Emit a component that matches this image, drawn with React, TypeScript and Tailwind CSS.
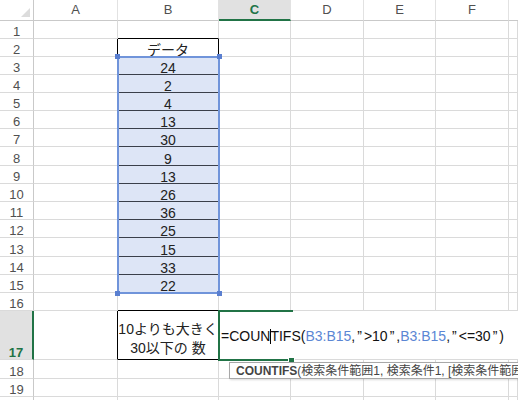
import React from 'react'

// --- sheet data ---
type Row = { n: number; h: string; v?: string; label?: boolean }

const dataRows: Row[] = [
  { n: 1, h: 'h-[18px]' },
  { n: 2, h: 'h-[18px]', v: 'データ' },
  { n: 3, h: 'h-[18px]', v: '24' },
  { n: 4, h: 'h-[18px]', v: '2' },
  { n: 5, h: 'h-[18px]', v: '4' },
  { n: 6, h: 'h-[18px]', v: '13' },
  { n: 7, h: 'h-[18px]', v: '30' },
  { n: 8, h: 'h-[19px]', v: '9' },
  { n: 9, h: 'h-[18px]', v: '13' },
  { n: 10, h: 'h-[18px]', v: '26' },
  { n: 11, h: 'h-[18px]', v: '36' },
  { n: 12, h: 'h-[18px]', v: '25' },
  { n: 13, h: 'h-[19px]', v: '15' },
  { n: 14, h: 'h-[18px]', v: '33' },
  { n: 15, h: 'h-[18px]', v: '22' },
  { n: 16, h: 'h-[18px]' },
]

const tailRows: Row[] = [
  { n: 18, h: 'h-[19px]' },
  { n: 19, h: 'h-[18px]' },
  { n: 20, h: 'h-[21px]', label: false },
]

const GRID = 'border-r border-b border-r-[#dadada] border-b-[#dadada]'

function RowHead({ n, label = true }: { n: number; label?: boolean }) {
  return (
    <div className="w-[34px] shrink-0 flex items-end justify-center border-r border-b border-r-[#c9c9c9] border-b-[#dadada] text-[13px] leading-[10px] pb-[1px] text-[#505050]">
      {label ? n : null}
    </div>
  )
}

function EmptyCells() {
  return (
    <>
      <div className={`w-[72px] shrink-0 ${GRID}`} />
      <div className={`w-[73px] shrink-0 ${GRID}`} />
      <div className={`w-[72px] shrink-0 ${GRID}`} />
      <div className={`w-[73px] shrink-0 ${GRID}`} />
      <div className={`flex-1 ${GRID}`} />
    </>
  )
}

function SheetRow({ row }: { row: Row }) {
  const boxed = row.n >= 2 && row.n <= 15
  const selected = row.n >= 3 && row.n <= 15
  const aRight = boxed ? 'border-r-black' : 'border-r-[#dadada]'
  let bClass = 'border-r-[#dadada] border-b-[#dadada]'
  if (row.n === 1 || row.n === 16) bClass = 'border-r-[#dadada] border-b-black'
  if (row.n === 2) bClass = 'border-r-black border-b-black'
  if (selected) bClass = 'border-r-black border-b-[#3a3f4a] bg-[#dde5f6]'

  return (
    <div className={`flex ${row.h}`}>
      <RowHead n={row.n} />
      <div className={`w-[84px] shrink-0 border-r border-b border-b-[#dadada] ${aRight}`} />
      <div className={`w-[101px] shrink-0 border-r border-b flex items-end justify-center text-[14px] leading-[10px] pb-[1px] text-[#222] ${bClass}`}>
        {row.v}
      </div>
      <EmptyCells />
    </div>
  )
}

function Ref({ children }: { children: React.ReactNode }) {
  return <span className="text-[#5b86d4]">{children}</span>
}

function Q() {
  return <span className="mx-[2px]">”</span>
}

export default function App() {
  return (
    <div className="relative w-[518px] h-[400px] overflow-hidden bg-white font-['Liberation_Sans','Noto_Sans_CJK_JP',sans-serif]">
      {/* --- column headers --- */}
      <div className="flex h-[21px]">
        <div className="w-[34px] shrink-0 border-r border-b border-r-[#c9c9c9] border-b-[#c9c9c9] flex items-end justify-end pr-[3px] pb-[3px]">
          <svg width="9" height="9" viewBox="0 0 9 9">
            <polygon points="9,0 9,9 0,9" fill="#dcdcdc" />
          </svg>
        </div>
        {['A', 'B'].map((c, i) => (
          <div
            key={c}
            className={`${i === 0 ? 'w-[84px]' : 'w-[101px]'} shrink-0 border-r border-b border-r-[#e2e2e2] border-b-[#c9c9c9] flex items-center justify-center text-[13px] text-[#505050]`}
          >
            {c}
          </div>
        ))}
        <div className="w-[72px] shrink-0 border-r border-b-2 border-r-[#e2e2e2] border-b-[#217346] bg-[#e1e1e1] flex items-center justify-center text-[13px] font-bold text-[#217346]">
          C
        </div>
        {['D', 'E', 'F'].map((c, i) => (
          <div
            key={c}
            className={`${i === 1 ? 'w-[72px]' : 'w-[73px]'} shrink-0 border-r border-b border-r-[#e2e2e2] border-b-[#c9c9c9] flex items-center justify-center text-[13px] text-[#505050]`}
          >
            {c}
          </div>
        ))}
        <div className="flex-1 border-b border-b-[#c9c9c9]" />
      </div>

      {/* --- rows 1-16 --- */}
      {dataRows.map((r) => (
        <SheetRow key={r.n} row={r} />
      ))}

      {/* --- row 17 (editing) --- */}
      <div className="flex h-[49px]">
        <div className="w-[34px] shrink-0 flex items-end justify-center border-r-2 border-b border-r-[#217346] border-b-[#dadada] bg-[#e1e1e1] text-[13px] leading-[10px] pb-[1px] font-bold text-[#217346]">
          17
        </div>
        <div className="w-[84px] shrink-0 border-r border-b border-r-black border-b-[#dadada]" />
        <div className="w-[101px] shrink-0 border-r border-b border-r-black border-b-black flex flex-col items-center justify-end pb-px text-[14px] leading-[19px] text-[#222]">
          <span>10よりも大きく</span>
          <span>30以下の 数</span>
        </div>
        <div className="flex-1 border-b border-b-[#dadada] flex items-center pl-[2px] pt-[3px] text-[14px] text-[#111] whitespace-nowrap">
          =COUN
          <span className="inline-block w-px h-[15px] bg-black -mr-px" />
          TIFS(<Ref>B3:B15</Ref>,<Q />&gt;10<Q />,<Ref>B3:B15</Ref>,<Q />&lt;=30<Q />)
        </div>
      </div>

      {/* --- rows 18-20 --- */}
      {tailRows.map((r) => (
        <div key={r.n} className={`flex ${r.h}`}>
          <RowHead n={r.n} label={r.label !== false} />
          <div className={`w-[84px] shrink-0 ${GRID}`} />
          <div className={`w-[101px] shrink-0 ${GRID}`} />
          <EmptyCells />
        </div>
      ))}

      {/* --- reference range highlight B3:B15 --- */}
      <div className="absolute left-[117px] top-[56px] w-[103px] h-[238px] border-2 border-[#7094da] pointer-events-none" />
      <div className="absolute left-[115px] top-[54px] w-[5px] h-[5px] bg-[#5a7fd0]" />
      <div className="absolute left-[217px] top-[54px] w-[5px] h-[5px] bg-[#5a7fd0]" />
      <div className="absolute left-[115px] top-[291px] w-[5px] h-[5px] bg-[#5a7fd0]" />
      <div className="absolute left-[217px] top-[291px] w-[5px] h-[5px] bg-[#5a7fd0]" />

      {/* --- active cell C17 --- */}
      <div className="absolute left-[218px] top-[310px] w-[75px] h-[51px] border-l-2 border-t-2 border-b-2 border-[#217346] pointer-events-none" />
      <div className="absolute left-[289px] top-[358px] w-[5px] h-[5px] bg-[#217346] outline outline-1 outline-white" />

      {/* --- function tooltip --- */}
      <div className="absolute left-[229px] top-[362px] h-[17px] w-[320px] border border-[#a8a8a8] bg-white shadow-[1px_1px_2px_rgba(0,0,0,0.15)] flex items-center pl-[6px] text-[12px] text-[#444] whitespace-nowrap">
        <span className="font-bold">COUNTIFS</span>
        <span>(検索条件範囲1, 検索条件1, [検索条件範囲2, 検索条件2], ...)</span>
      </div>
    </div>
  )
}
